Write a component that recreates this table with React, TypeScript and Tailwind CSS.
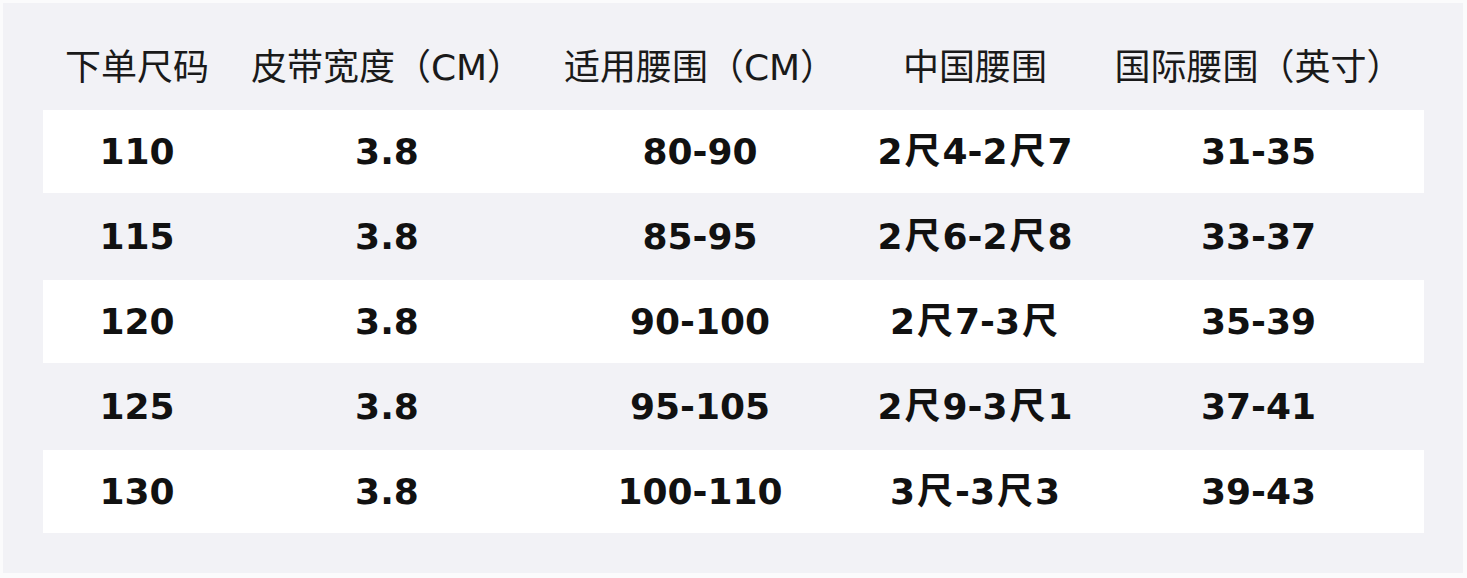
const headers = ["下单尺码", "皮带宽度（CM）", "适用腰围（CM）", "中国腰围", "国际腰围（英寸）"];

const rows = [
  ["110", "3.8", "80-90", "2尺4-2尺7", "31-35"],
  ["115", "3.8", "85-95", "2尺6-2尺8", "33-37"],
  ["120", "3.8", "90-100", "2尺7-3尺", "35-39"],
  ["125", "3.8", "95-105", "2尺9-3尺1", "37-41"],
  ["130", "3.8", "100-110", "3尺-3尺3", "39-43"],
];

const cols = "grid grid-cols-[188px_312px_314px_236px_331px]";

// 尺 sits a little looser than the digits around it
function Cell({ text }: { text: string }) {
  const parts = text.split("尺");
  return (
    <div className="text-center leading-none whitespace-nowrap">
      {parts.map((p, k) => (
        <span key={k}>
          {p}
          {k < parts.length - 1 && <span className="mx-[2px]">尺</span>}
        </span>
      ))}
    </div>
  );
}

export default function App() {
  return (
    <div className="w-[1467px] h-[578px] bg-[#fbfbfc] p-[3px] font-['DejaVu_Sans','Noto_Sans_CJK_SC',sans-serif]">
      <div className="h-[570px] w-[1460px] bg-[#f2f2f6] pt-[22px] pl-[40px] pr-[39px]">
        <div className={`${cols} h-[85px] items-center text-[36px] text-[#1a1a1a]`}>
          {headers.map((h) => (
            <div key={h} className="text-center leading-none whitespace-nowrap">
              {h}
            </div>
          ))}
        </div>
        {rows.map((r, i) => (
          <div
            key={r[0]}
            className={`${cols} items-center text-[36px] font-bold text-[#111111] ${
              i % 2 === 0 ? "bg-white h-[83px]" : "h-[87px]"
            }`}
          >
            {r.map((c, j) => (
              <Cell key={j} text={c} />
            ))}
          </div>
        ))}
      </div>
    </div>
  );
}
